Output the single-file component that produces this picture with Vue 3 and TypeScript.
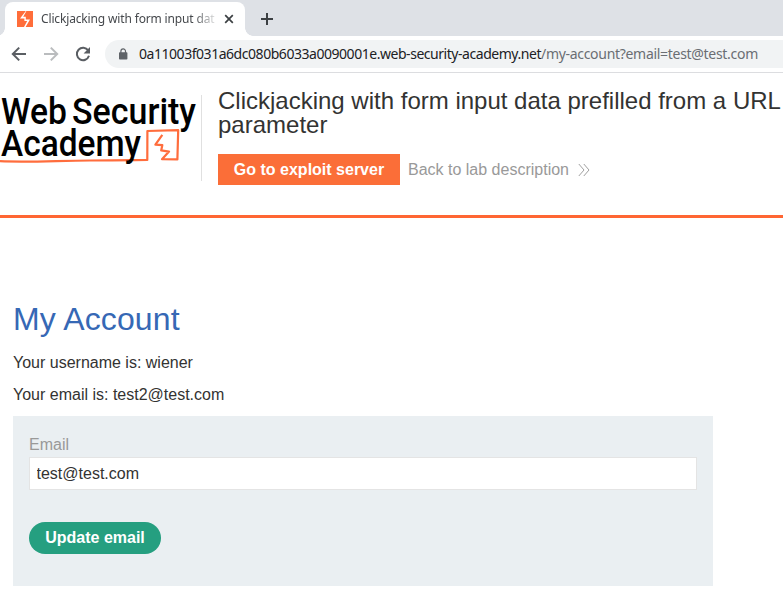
<script setup lang="ts">
import { ref } from 'vue'

const tabTitle = 'Clickjacking with form input data prefilled'
const host = '0a11003f031a6dc080b6033a0090001e.web-security-academy.net'
const path = '/my-account?email=test@test.com'
const username = 'wiener'
const currentEmail = 'test2@test.com'
const email = ref<string>('test@test.com')
</script>

<template>
  <div class="browser">
    <div class="tabstrip">
      <div class="tab">
        <svg class="favicon" width="16" height="16" viewBox="0 0 16 16">
          <rect width="16" height="16" fill="#ff6d3a" />
          <path d="M8.8 0 L3 7.4 H7.4 V10 H10.2 L7 16 H8.6 L13 8.4 H8.8 V5.8 H6.2 L9.4 0 Z" fill="#fff" />
        </svg>
        <span class="tab-title">{{ tabTitle }}</span>
        <svg class="tab-close" width="10" height="10" viewBox="0 0 10 10">
          <path d="M1.2 1.2 L8.8 8.8 M8.8 1.2 L1.2 8.8" stroke="#3c4043" stroke-width="1.7" />
        </svg>
      </div>
      <svg class="new-tab" width="12" height="12" viewBox="0 0 12 12">
        <path d="M6 0 V12 M0 6 H12" stroke="#3c4043" stroke-width="2" />
      </svg>
    </div>
    <div class="toolbar">
      <svg class="nav" width="16" height="16" viewBox="0 0 16 16">
        <path d="M15 8 H2.4 M8.2 1.6 L1.8 8 L8.2 14.4" fill="none" stroke="#5a5e63" stroke-width="2" />
      </svg>
      <svg class="nav" width="16" height="16" viewBox="0 0 16 16">
        <path d="M1 8 H13.6 M7.8 1.6 L14.2 8 L7.8 14.4" fill="none" stroke="#babcbe" stroke-width="2" />
      </svg>
      <svg class="nav" width="16" height="16" viewBox="0 0 16 16">
        <path d="M13.2 4.4 A6.2 6.2 0 1 0 14 9.8" fill="none" stroke="#5a5e63" stroke-width="2" />
        <path d="M15 1 V7.4 H8.6 Z" fill="#5a5e63" />
      </svg>
      <div class="omnibox">
        <svg class="lock" width="10" height="12" viewBox="0 0 10 12">
          <rect x="1" y="4.3" width="8.4" height="7.2" rx="0.8" fill="#5f6368" />
          <path d="M2.9 5 V3.2 A2.3 2.3 0 0 1 7.5 3.2 V5" fill="none" stroke="#5f6368" stroke-width="1.2" />
        </svg>
        <span class="url"><span class="host">{{ host }}</span><span class="path">{{ path }}</span></span>
      </div>
    </div>

    <header class="lab-header">
      <svg class="logo" width="201" height="86" viewBox="0 0 201 86">
        <path d="M0 66.2 C30 67.5 60 65.5 90 65.5 S130 65.2 147.3 65 L147.4 36 L178.2 35.2 L177.4 64.4 L162 64.2 L169 56.6 L161.2 55.4 L162.3 50.2 L155.4 49.6 L162.3 39.8" class="logo-line" />
        <g class="logo-text">
          <text x="1" y="28.8" textLength="66" lengthAdjust="spacingAndGlyphs">Web</text>
          <text x="72" y="28.8" textLength="124" lengthAdjust="spacingAndGlyphs">Security</text>
          <text x="1" y="60.8" textLength="140" lengthAdjust="spacingAndGlyphs">Academy</text>
        </g>
      </svg>
      <div class="lab-info">
        <h2>Clickjacking with form input data prefilled from a URL parameter</h2>
        <div class="lab-actions">
          <a class="exploit">Go to exploit server</a>
          <a class="back">Back to lab description</a>
          <svg class="chevrons" width="12" height="14" viewBox="0 0 12 14">
            <path d="M0.8 1 L6 7 L0.8 13 M5.8 1 L11 7 L5.8 13" fill="none" stroke="#a0a0a0" stroke-width="1" />
          </svg>
        </div>
      </div>
    </header>

    <main class="account">
      <h1>My Account</h1>
      <p>Your username is: {{ username }}</p>
      <p>Your email is: {{ currentEmail }}</p>
      <form class="email-form" @submit.prevent>
        <label for="email">Email</label>
        <input id="email" v-model="email" type="email" />
        <button type="submit">Update email</button>
      </form>
    </main>
  </div>
</template>

<style>
body {
  margin: 0;
  background: #fff;
}
</style>

<style scoped>
* {
  box-sizing: border-box;
}
.browser {
  height: 598px;
  overflow: hidden;
  background: #fff;
  color: #333332;
  font: 16px/20px "Liberation Sans", Arial, sans-serif;
}
.tabstrip {
  display: flex;
  align-items: flex-end;
  height: 36px;
  padding-left: 5px;
  background: #dee1e6;
}
.tab {
  position: relative;
  display: flex;
  align-items: center;
  width: 240px;
  height: 34px;
  padding: 0 11px 0 12px;
  border-radius: 8px 8px 0 0;
  background: #fff;
}
.tab::before,
.tab::after {
  content: "";
  position: absolute;
  bottom: 0;
  width: 8px;
  height: 8px;
}
.tab::before {
  left: -8px;
  background: radial-gradient(circle at 0 0, transparent 7.5px, #fff 8px);
}
.tab::after {
  right: -8px;
  background: radial-gradient(circle at 100% 0, transparent 7.5px, #fff 8px);
}
.tab-title {
  width: 174px;
  margin-left: 8px;
  overflow: hidden;
  white-space: nowrap;
  color: #45484c;
  font: 12px/18px "Noto Sans", sans-serif;
  letter-spacing: -0.15px;
  mask-image: linear-gradient(90deg, #000 152px, transparent 178px);
}
.tab-close {
  margin-left: 9px;
}
.new-tab {
  margin: 0 0 11px 16px;
}
.toolbar {
  display: flex;
  align-items: center;
  gap: 16px;
  height: 37px;
  padding-left: 11px;
  border-bottom: 1px solid #dcdde0;
}
.omnibox {
  display: flex;
  flex: 1;
  align-items: center;
  height: 28px;
  margin-left: -2px;
  padding-left: 13px;
  border-radius: 14px 0 0 14px;
  background: #f1f3f4;
}
.url {
  margin-left: 11px;
  white-space: nowrap;
  font: 14px/20px "Noto Sans", sans-serif;
}
.host {
  color: #202124;
  letter-spacing: -0.46px;
}
.path {
  color: #6a6e73;
  letter-spacing: -0.3px;
}
.lab-header {
  display: flex;
  height: 145px;
  padding-top: 22px;
  border-bottom: 3px solid #ff6633;
}
.logo {
  flex: none;
}
.logo-text {
  fill: #000;
  font: 500 37px Roboto, sans-serif;
}
.logo-line {
  fill: none;
  stroke: #ff6d3d;
  stroke-width: 2.2;
  stroke-linejoin: round;
}
.lab-info {
  flex: 1;
  height: 86px;
  padding-left: 16px;
  border-left: 1px solid #e0e0e0;
}
h2 {
  margin: -6px -10px 0 0;
  font-size: 24px;
  font-weight: 400;
  line-height: 24px;
}
.lab-actions {
  display: flex;
  align-items: center;
  margin-top: 17px;
}
.exploit {
  width: 182px;
  height: 31px;
  background: #fb6e38;
  color: #fff;
  font-weight: 700;
  line-height: 31px;
  text-align: center;
}
.back {
  margin-left: 8px;
  color: #999;
}
.chevrons {
  margin-left: 9px;
}
.account {
  padding: 83px 0 0 13px;
}
h1 {
  margin: 0;
  color: #3668b5;
  font-size: 32px;
  font-weight: 400;
  line-height: 36px;
  letter-spacing: 0.13px;
}
p {
  height: 20px;
  margin: 16px 0 0;
}
p + p {
  margin-top: 12px;
}
.email-form {
  width: 700px;
  height: 170px;
  margin-top: 11px;
  padding: 19px 16px 0;
  background: #eaeff2;
}
label {
  display: block;
  height: 22px;
  color: #999;
}
input {
  display: block;
  width: 668px;
  height: 33px;
  padding: 0 6.5px;
  border: 1px solid #e4e4e4;
  background: #fff;
  color: #333332;
  font: 16px "Liberation Sans", Arial, sans-serif;
}
button {
  width: 132px;
  height: 32px;
  margin-top: 32px;
  padding: 0;
  border: 0;
  border-radius: 16px;
  background: #259f80;
  color: #fff;
  font: 700 16px "Liberation Sans", Arial, sans-serif;
}
</style>
